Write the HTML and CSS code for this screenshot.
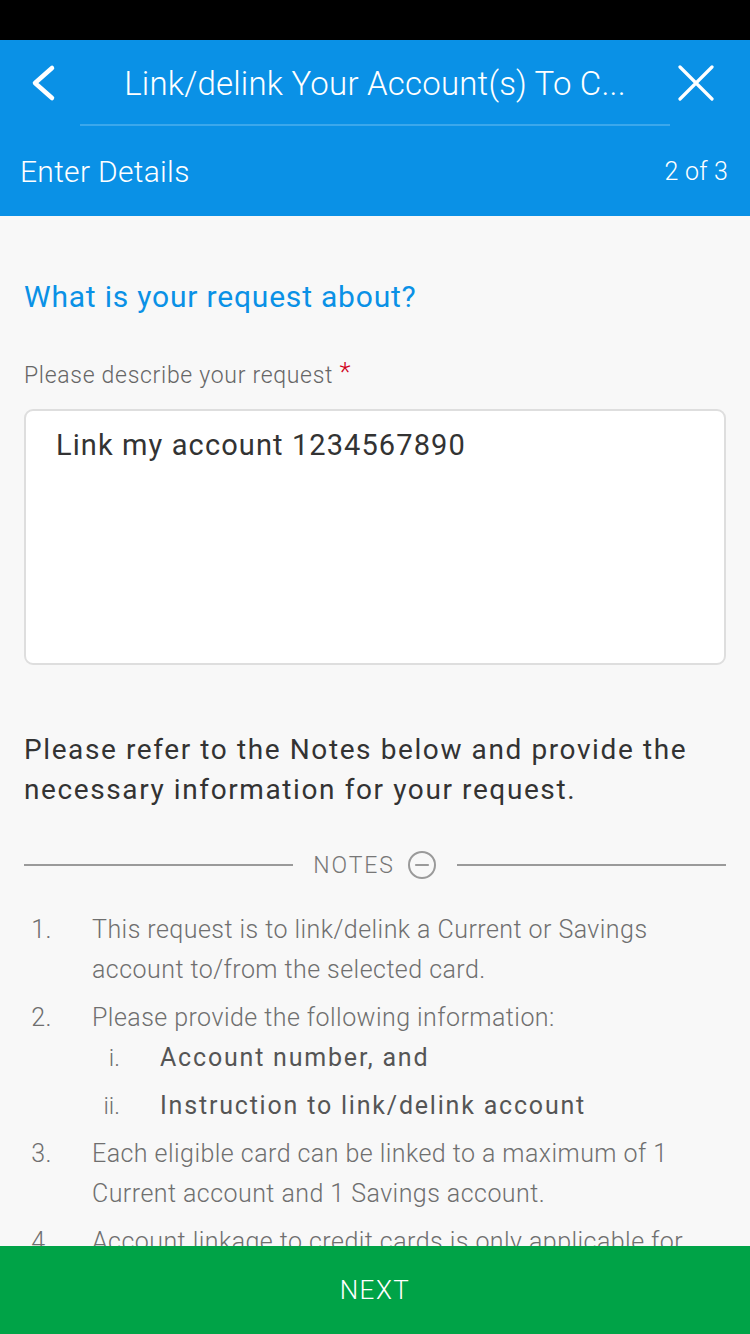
FILE: index.html
```html
<!DOCTYPE html>
<html lang="en">
<head>
<meta charset="utf-8">
<title>Link/delink Your Account(s)</title>
<link rel="stylesheet" href="styles.css">
</head>
<body>
<div class="status"></div>
<header class="header">
  <div class="topbar">
    <button class="icon-btn back" aria-label="Back">
      <svg width="40" height="40" viewBox="0 0 40 40"><path d="M30 5 L13 20 L30 35" fill="none" stroke="#fff" stroke-width="4.5" stroke-linecap="round" stroke-linejoin="round"/></svg>
    </button>
    <div class="title"><span>Link/delink Your Account(s) To C...</span></div>
    <button class="icon-btn close" aria-label="Close">
      <svg width="40" height="40" viewBox="0 0 40 40"><path d="M2 4 L34 36 M34 4 L2 36" fill="none" stroke="#fff" stroke-width="3.2" stroke-linecap="round"/></svg>
    </button>
  </div>
  <div class="subbar">
    <span class="step-name">Enter Details</span>
    <span class="step-count">2 of 3</span>
  </div>
</header>
<main class="content">
  <h2 class="question">What is your request about?</h2>
  <label class="field-label">Please describe your request <span class="req">*</span></label>
  <div class="textbox">Link my account 1234567890</div>
  <p class="intro">Please refer to the Notes below and provide the necessary information for your request.</p>
  <div class="notes-divider">
    <span class="rule"></span>
    <span class="notes-label">NOTES
      <svg width="30" height="30" viewBox="0 0 30 30"><circle cx="15" cy="15" r="13" fill="none" stroke="#9a9a9a" stroke-width="2"/><path d="M9 15 H21" stroke="#9a9a9a" stroke-width="2.2" stroke-linecap="round"/></svg>
    </span>
    <span class="rule"></span>
  </div>
  <ol class="notes">
    <li class="note"><span class="num">1.</span><div class="txt">This request is to link/delink a Current or Savings account to/from the selected card.</div></li>
    <li class="note"><span class="num">2.</span><div class="txt">Please provide the following information:
      <ol class="sub">
        <li class="subnote"><span class="num">i.</span><span class="subtxt">Account number, and</span></li>
        <li class="subnote"><span class="num">ii.</span><span class="subtxt">Instruction to link/delink account</span></li>
      </ol>
    </div></li>
    <li class="note"><span class="num">3.</span><div class="txt">Each eligible card can be linked to a maximum of 1 Current account and 1 Savings account.</div></li>
    <li class="note"><span class="num">4.</span><div class="txt">Account linkage to credit cards is only applicable for principal cardholders.</div></li>
  </ol>
</main>
<footer class="footer">
  <button class="next">NEXT</button>
</footer>
</body>
</html>
```
FILE: styles.css
```css
* { box-sizing: border-box; }
html, body { margin: 0; padding: 0; }
body {
  width: 750px;
  height: 1334px;
  overflow: hidden;
  display: flex;
  flex-direction: column;
  background: #f8f8f8;
  font-family: Roboto, "Liberation Sans", Arial, sans-serif;
  color: #333;
}
.status { height: 40px; flex: none; background: #000; }
.header { flex: none; background: #0a91e6; color: #fff; }
.topbar { display: flex; align-items: stretch; height: 86px; }
.icon-btn {
  width: 80px; border: 0; background: transparent; padding: 0;
  display: flex; align-items: center; justify-content: center;
}
.back { justify-content: flex-start; padding-left: 22px; }
.close { justify-content: flex-start; padding-left: 8px; }
.title {
  flex: 1;
  display: flex; align-items: center; justify-content: center;
  border-bottom: 2px solid #3ba8ec;
  font-weight: 300;
  font-size: 33px;
  letter-spacing: 0.2px;
  white-space: nowrap;
  padding-top: 2px;
}
.subbar {
  height: 90px;
  display: flex; align-items: center; justify-content: space-between;
  padding: 0 22px 0 20px;
  font-weight: 300;
}
.step-name { font-size: 30px; letter-spacing: 0.3px; }
.step-count { font-size: 25px; letter-spacing: 0.2px; }
.content { flex: 1; min-height: 0; overflow: hidden; padding: 0 24px; }
.question {
  margin: 61px 0 0;
  font-size: 30px; line-height: 40px; font-weight: 400;
  color: #0a91e6; letter-spacing: 0.8px;
}
.field-label {
  display: block; margin-top: 44px;
  font-size: 23px; line-height: 30px; font-weight: 300; color: #666; letter-spacing: 0.7px;
}
.req { color: #d0021b; font-size: 26px; vertical-align: top; position: relative; top: -4px; }
.textbox {
  margin-top: 18px; height: 256px;
  background: #fff; border: 2px solid #dedede; border-radius: 9px;
  padding: 14px 30px;
  font-size: 29px; line-height: 40px; color: #333; letter-spacing: 1.1px;
}
.intro {
  margin: 65px 0 0;
  font-size: 28px; line-height: 40px; color: #333; letter-spacing: 1.6px;
}
.notes-divider {
  margin-top: 35px; height: 40px;
  display: flex; align-items: center; gap: 20px;
}
.rule { flex: 1; height: 2px; background: #9a9a9a; }
.notes-label {
  display: flex; align-items: center; gap: 12px;
  font-size: 23px; font-weight: 300; color: #777; letter-spacing: 1.9px;
}
.notes { list-style: none; margin: 25px 0 0; padding: 0; }
.note { display: flex; margin-top: 8px; }
.note:first-child { margin-top: 0; }
.num { width: 28px; flex: none; text-align: right; margin-right: 40px; }
.note > .num, .txt {
  font-size: 25px; line-height: 40px; font-weight: 300; color: #6f6f6f; letter-spacing: 0.45px;
}
.txt { flex: 1; }
.sub { list-style: none; margin: 0; padding: 0; }
.subnote { display: flex; margin-top: 8px; }
.subnote:first-child { margin-top: 0; }
.subnote .num { font-size: 24px; font-weight: 300; color: #6f6f6f; letter-spacing: 0; }
.subtxt { font-size: 25px; font-weight: 400; color: #555; letter-spacing: 1.8px; }
.footer {
  flex: none; height: 88px;
  background: #00a347;
}
.next {
  width: 100%; height: 100%; border: 0; background: transparent;
  color: #fff; font-family: Roboto, "Liberation Sans", Arial, sans-serif;
  font-size: 26px; font-weight: 300; letter-spacing: 1.5px;
}
```
